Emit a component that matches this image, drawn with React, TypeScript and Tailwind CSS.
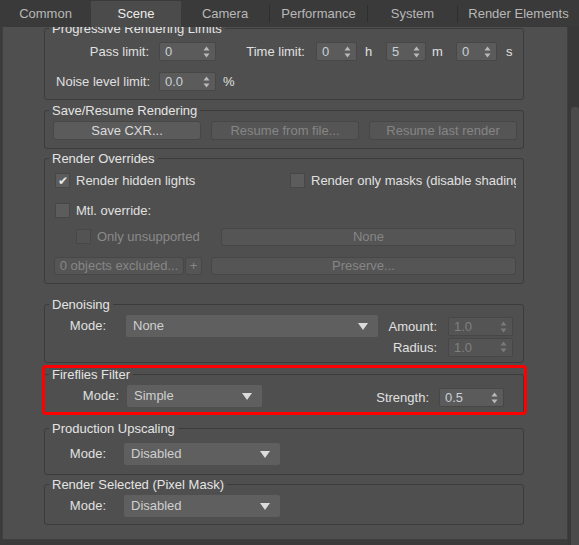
import React from 'react';

const font = "font-['Liberation_Sans',Arial,sans-serif]";

function Arrows({ dim }: { dim?: boolean }) {
  const c = dim ? '#7a7a7a' : '#b9b9b9';
  return (
    <svg width="7" height="12" viewBox="0 0 7 12" className="ml-auto mr-[5px] shrink-0">
      <path d="M3.5 0.5 L6.5 4.5 L0.5 4.5 Z" fill={c} />
      <path d="M0.5 7.5 L6.5 7.5 L3.5 11.5 Z" fill={c} />
    </svg>
  );
}

function Spinner({ value, className = '', disabled }: { value: string; className?: string; disabled?: boolean }) {
  return (
    <div
      className={`flex items-center h-[19px] shrink-0 rounded-[2px] border border-[#474747] pl-[5px] ${
        disabled ? 'bg-[#545454] text-[#808080]' : 'bg-[#5b5b5b] text-[#c9d0d8]'
      } ${className}`}
    >
      <span>{value}</span>
      <Arrows dim={disabled} />
    </div>
  );
}

function Dropdown({ value, className = '' }: { value: string; className?: string }) {
  return (
    <div className={`flex items-center h-[22px] shrink-0 rounded-[2px] bg-[#5f5f5f] pl-[7px] text-[#cfcfcf] ${className}`}>
      <span>{value}</span>
      <svg width="10" height="7" viewBox="0 0 10 7" className="ml-auto mr-[10px]">
        <path d="M0 0 L10 0 L5 7 Z" fill="#dcdcdc" />
      </svg>
    </div>
  );
}

function Button({ label, className = '', disabled }: { label: string; className?: string; disabled?: boolean }) {
  return (
    <div
      className={`flex items-center justify-center shrink-0 rounded-[3px] border border-[#474747] ${
        disabled ? 'bg-[#555555] text-[#868686]' : 'bg-[#5b5b5b] text-[#dcdcdc]'
      } ${className}`}
    >
      {label}
    </div>
  );
}

function Check({ checked, disabled }: { checked?: boolean; disabled?: boolean }) {
  return (
    <div
      className={`w-[15px] h-[15px] shrink-0 flex items-center justify-center border border-[#474747] ${
        disabled ? 'bg-[#535353]' : 'bg-[#5c5c5c]'
      }`}
    >
      {checked && <span className="text-[12px] leading-none text-[#e6e6e6]">✔</span>}
    </div>
  );
}

function Group({ title, className = '', children }: { title: string; className?: string; children: React.ReactNode }) {
  return (
    <fieldset className={`w-[480px] ml-[41px] border border-[#3b3b3b] rounded-[3px] ${className}`}>
      <legend className="ml-[4px] px-[3px] leading-[15px] text-[#e4e4e4]">{title}</legend>
      {children}
    </fieldset>
  );
}

const tabs = ['Common', 'Scene', 'Camera', 'Performance', 'System', 'Render Elements'];
const tabW = ['w-[91px]', 'w-[90px]', 'w-[89px]', 'w-[98px]', 'w-[90px]', 'flex-1'];

export default function App() {
  return (
    <div className={`relative w-[579px] h-[545px] overflow-hidden bg-[#3b3b3b] text-[13px] text-[#e0e0e0] flex flex-col ${font}`}>
      {/* Tabs */}
      <div className="flex h-[27px] shrink-0 bg-[#3a3a3a] items-center">
        {tabs.map((t, i) => (
          <div key={t} className={`flex items-center h-full ${tabW[i]}`}>
            <div
              className={`flex-1 h-full flex items-center justify-center ${
                t === 'Scene' ? 'bg-[#4b4b4b] text-[#ececec] mt-[1px]' : 'text-[#b8b8b8]'
              }`}
            >
              {t}
            </div>
            {(t === 'Camera' || t === 'Performance' || t === 'System') && <div className="w-px h-[17px] bg-[#2e2e2e]" />}
          </div>
        ))}
      </div>

      <div className="flex flex-1 min-h-0">
        {/* Scroll panel, scrolled a little down */}
        <div className="ml-[2px] w-[566px] h-[513px] overflow-hidden bg-[#4f4f4f] border-l border-r border-b border-[#3e3e3e] rounded-b-[2px]">
          <div className="-mt-[6px]">
            <Group title="Progressive Rendering Limits" className="h-[79px]">
              <div className="flex items-center h-[19px] mt-[6px]">
                <span className="w-[104px] text-right">Pass limit:</span>
                <Spinner value="0" className="ml-[10px] w-[57px]" />
                <span className="w-[89px] text-right">Time limit:</span>
                <Spinner value="0" className="ml-[11px] w-[41px]" />
                <span className="ml-[8px] w-[21px]">h</span>
                <Spinner value="5" className="w-[40px]" />
                <span className="ml-[6px] w-[24px]">m</span>
                <Spinner value="0" className="w-[41px]" />
                <span className="ml-[9px]">s</span>
              </div>
              <div className="flex items-center h-[19px] mt-[11px]">
                <span className="w-[105px] text-right">Noise level limit:</span>
                <Spinner value="0.0" className="ml-[9px] w-[57px]" />
                <span className="ml-[7px]">%</span>
              </div>
            </Group>

            <Group title="Save/Resume Rendering" className="h-[46px] mt-[3px]">
              <div className="flex gap-[10px] ml-[8px] mt-[3px]">
                <Button label="Save CXR..." className="w-[148px] h-[19px]" />
                <Button label="Resume from file..." disabled className="w-[148px] h-[19px]" />
                <Button label="Resume last render" disabled className="w-[148px] h-[19px]" />
              </div>
            </Group>

            <Group title="Render Overrides" className="h-[133px] mt-[2px]">
              <div className="flex items-center ml-[10px] mt-[7px] h-[15px]">
                <div className="flex items-center w-[235px]">
                  <Check checked />
                  <span className="ml-[6px]">Render hidden lights</span>
                </div>
                <Check />
                <span className="ml-[6px] w-[205px] overflow-hidden whitespace-nowrap">Render only masks (disable shading)</span>
              </div>
              <div className="flex items-center ml-[10px] mt-[15px] h-[15px]">
                <Check />
                <span className="ml-[6px]">Mtl. override:</span>
              </div>
              <div className="flex items-center mt-[9px]">
                <div className="flex items-center ml-[31px] w-[145px]">
                  <Check disabled />
                  <span className="ml-[6px] text-[#8a8a8a]">Only unsupported</span>
                </div>
                <Button label="None" disabled className="w-[295px] h-[18px]" />
              </div>
              <div className="flex items-center mt-[10px] ml-[9px]">
                <Button label="0 objects excluded..." disabled className="w-[130px] h-[18px]" />
                <Button label="+" disabled className="ml-[1px] w-[17px] h-[18px]" />
                <Button label="Preserve..." disabled className="ml-[9px] w-[305px] h-[18px]" />
              </div>
            </Group>

            <Group title="Denoising" className="h-[66px] mt-[13px]">
              <div className="flex items-start">
                <div className="flex items-center mt-[3px]">
                  <span className="w-[61px] text-right">Mode:</span>
                  <Dropdown value="None" className="ml-[20px] w-[252px]" />
                </div>
                <div className="flex flex-col gap-[1px] mt-[5px]">
                  <div className="flex items-center">
                    <span className="w-[59px] text-right">Amount:</span>
                    <Spinner value="1.0" disabled className="ml-[11px] w-[65px]" />
                  </div>
                  <div className="flex items-center">
                    <span className="w-[59px] text-right">Radius:</span>
                    <Spinner value="1.0" disabled className="ml-[11px] w-[65px]" />
                  </div>
                </div>
              </div>
            </Group>

            <Group title="Fireflies Filter" className="h-[47px] mt-[4px]">
              <div className="flex items-start">
                <div className="flex items-center mt-[3px]">
                  <span className="w-[74px] text-right">Mode:</span>
                  <Dropdown value="Simple" className="ml-[8px] w-[135px]" />
                </div>
                <div className="flex items-center mt-[6px]">
                  <span className="w-[167px] text-right">Strength:</span>
                  <Spinner value="0.5" className="ml-[10px] w-[65px]" />
                </div>
              </div>
            </Group>

            <Group title="Production Upscaling" className="h-[54px] mt-[7px]">
              <div className="flex items-center mt-[7px]">
                <span className="w-[61px] text-right">Mode:</span>
                <Dropdown value="Disabled" className="ml-[18px] w-[156px]" />
              </div>
            </Group>

            <Group title="Render Selected (Pixel Mask)" className="h-[48px] mt-[2px]">
              <div className="flex items-center mt-[3px]">
                <span className="w-[61px] text-right">Mode:</span>
                <Dropdown value="Disabled" className="ml-[18px] w-[156px]" />
              </div>
            </Group>
          </div>
        </div>

        {/* Scrollbar */}
        <div className="flex-1 flex flex-col bg-[#383838] pl-[3px]">
          <div className="mt-[80px] flex-1 bg-[#4a4a4a] rounded-t-[3px]" />
        </div>
      </div>

      {/* Highlight annotation */}
      <div className="absolute left-[42px] top-[365px] w-[485px] h-[50px] border-[3px] border-[#ff0000] rounded-[4px] pointer-events-none" />
    </div>
  );
}
